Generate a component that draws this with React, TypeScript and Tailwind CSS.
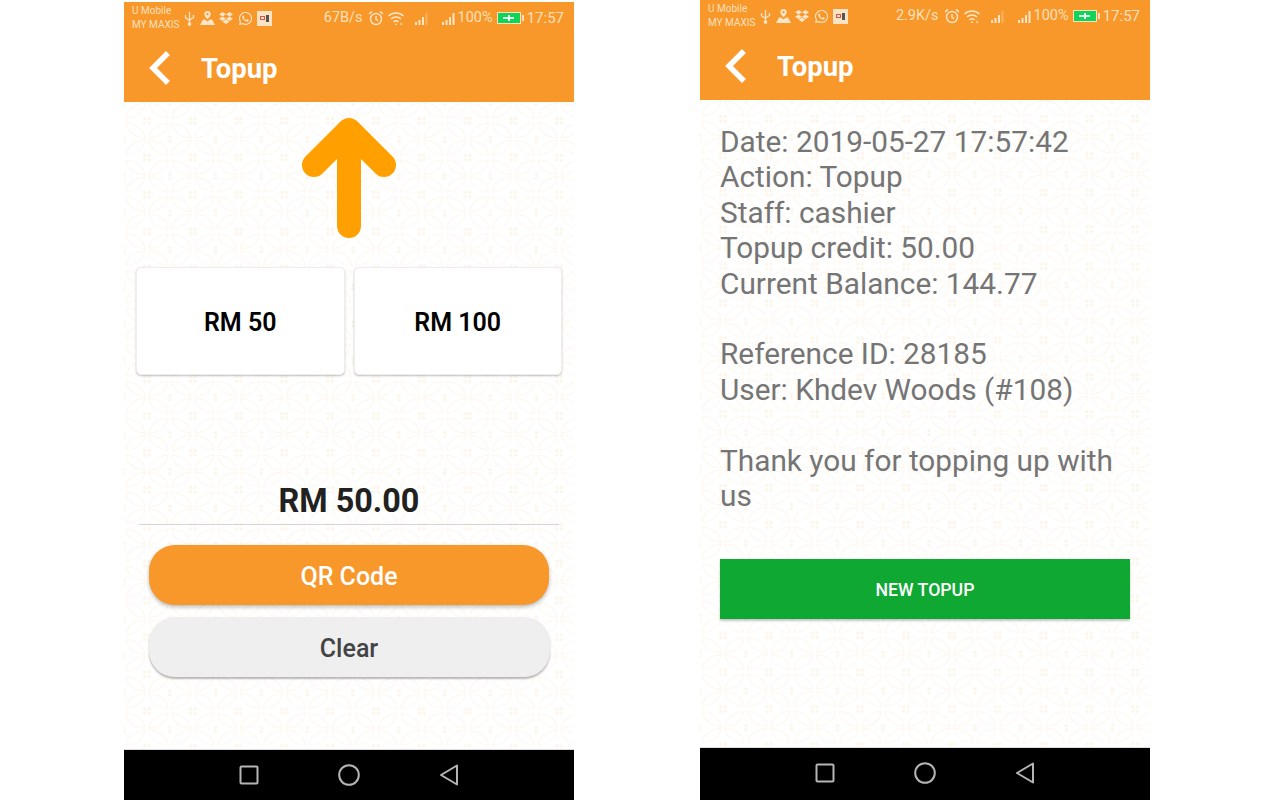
import { ReactNode } from "react";
import { FaDropbox, FaWhatsapp } from "react-icons/fa";

const font = { fontFamily: "Roboto, sans-serif" };

function PatternBg({ id }: { id: string }) {
  return (
    <svg className="absolute inset-0 h-full w-full" aria-hidden="true">
      <defs>
        <pattern id={id} width="45.8" height="36.9" patternUnits="userSpaceOnUse">
          <g fill="none" stroke="#fdf6ec" strokeWidth="1">
            <path d="M2 16 Q4 3 21 1 Q19 14 2 16Z" />
            <path d="M44 16 Q42 3 25 1 Q27 14 44 16Z" />
            <path d="M2 21 Q4 34 21 36 Q19 23 2 21Z" />
            <path d="M44 21 Q42 34 25 36 Q27 23 44 21Z" />
          </g>
          <g fill="#fdf5e9">
            <rect x="19.2" y="15" width="3" height="3" />
            <rect x="23.7" y="15" width="3" height="3" />
            <rect x="19.2" y="19.5" width="3" height="3" />
            <rect x="23.7" y="19.5" width="3" height="3" />
            <rect x="-1.5" y="1" width="3" height="3" />
            <rect x="44.3" y="1" width="3" height="3" />
            <rect x="-1.5" y="33.9" width="3" height="3" />
            <rect x="44.3" y="33.9" width="3" height="3" />
          </g>
        </pattern>
      </defs>
      <rect width="100%" height="100%" fill={`url(#${id})`} />
    </svg>
  );
}

function Signal({ dim }: { dim?: boolean }) {
  return (
    <svg width="16" height="15" viewBox="0 0 16 15" fill="#fde6c8">
      <rect x="1" y="11" width="2" height="3" />
      <rect x="4.5" y="9" width="2" height="5" />
      <rect x="8" y="6" width="2" height="8" />
      <rect x="11.5" y="2" width="2" height="12" opacity={dim ? 0.35 : 1} />
    </svg>
  );
}

function StatusBar({ speed }: { speed: string }) {
  return (
    <div className="flex h-[30px] items-center pl-2 pr-[10px] pt-[2px] text-[#fde0bb]">
      <div className="w-[52px] text-[10px] leading-[14px] whitespace-nowrap">
        <div>U Mobile</div>
        <div>MY MAXIS</div>
      </div>
      <div className="flex items-center gap-[4.5px]">
        {/* usb */}
        <svg width="11" height="15" viewBox="0 0 11 15" fill="none" stroke="#fde6c8" strokeWidth="1.3">
          <path d="M5.5 1v13M1.5 4v3l4 2.5M9.5 4v2.5l-4 2.5" />
          <circle cx="5.5" cy="13" r="1.2" fill="#fde6c8" />
        </svg>
        {/* map pin */}
        <svg width="15" height="14" viewBox="0 0 15 14" fill="#fde6c8">
          <path d="M7.5 0a3.2 3.2 0 0 1 3.2 3.2c0 1.8-2 3.6-3.2 5-1.2-1.4-3.2-3.2-3.2-5A3.2 3.2 0 0 1 7.5 0z" />
          <path d="M3 8.5h2l2.5 2 2.5-2h2l3 5.5H0z" />
          <circle cx="7.5" cy="3.2" r="1.1" fill="#f8972a" />
        </svg>
        <FaDropbox size={14} color="#fde6c8" />
        <FaWhatsapp size={15} color="#fde6c8" />
        <div className="flex h-[15px] w-[15px] items-center justify-center gap-[1px] bg-[#fce3c4]">
          <div className="h-[4px] w-[5px] border border-[#d9534f]" />
          <div className="h-[7px] w-[3px] bg-[#555555]" />
        </div>
      </div>
      <div className="ml-auto flex items-center text-[14.5px] whitespace-nowrap">
        <span>{speed}</span>
        {/* alarm */}
        <svg className="ml-[5px]" width="16" height="16" viewBox="0 0 16 16" fill="none" stroke="#fde6c8" strokeWidth="1.4">
          <circle cx="8" cy="9" r="5.5" />
          <path d="M8 6v3.3l2.2 1.4M1 4l3-2.6M15 4l-3-2.6" />
        </svg>
        {/* wifi */}
        <svg className="ml-[3px]" width="18" height="15" viewBox="0 0 17 15" fill="none" stroke="#fde6c8" strokeWidth="1.4">
          <path d="M1 5a11 11 0 0 1 15 0M3.5 8a7.4 7.4 0 0 1 10 0M6 11a3.6 3.6 0 0 1 5 0" />
          <circle cx="8.5" cy="13.2" r="0.9" fill="#fde6c8" stroke="none" />
          <path d="M13 11.5l2 1.5-2 1.5z" fill="#fde6c8" stroke="none" />
        </svg>
        <div className="ml-[9px] flex">
          <Signal dim />
        </div>
        <div className="ml-[11px] flex">
          <Signal />
        </div>
        <span className="ml-[1px]">100%</span>
        {/* battery */}
        <div className="ml-[4px] flex items-center">
          <div className="flex h-[12px] w-[24px] items-center justify-center border border-[#fde0bb] bg-[#0fd45c]">
            <div className="h-[2px] w-[11px] bg-[#e6fff0]" />
            <div className="absolute h-[6px] w-[2px] bg-[#e6fff0]" />
          </div>
          <div className="ml-[1px] h-[6px] w-[2px] bg-[#fde0bb]" />
        </div>
        <span className="ml-[3px] text-[15px]">17:57</span>
      </div>
    </div>
  );
}

function Phone({ id, speed, navExtra, topGap, children }: { id: string; speed: string; navExtra?: boolean; topGap?: boolean; children: ReactNode }) {
  return (
    <div className={`flex h-[800px] w-[450px] flex-col bg-white ${topGap ? "pt-[2px]" : ""}`}>
      <div className="h-[100px] shrink-0 bg-[#f8972a]">
        <StatusBar speed={speed} />
        <div className="flex h-[70px] items-center pl-[24px] pt-[2px]">
          <svg width="24" height="34" viewBox="0 0 24 34" fill="none" stroke="#ffffff" strokeWidth="5.5" strokeLinecap="square">
            <path d="M18 4L5 17l13 13" />
          </svg>
          <span className="ml-[29px] mt-[2px] text-[27.5px] font-bold text-white">Topup</span>
        </div>
      </div>
      <div className="relative min-h-0 flex-1 overflow-hidden">
        <PatternBg id={id} />
        <div className="relative h-full">{children}</div>
      </div>
      <div className={`flex shrink-0 items-center justify-center gap-[79px] border-t border-[#dddddd] bg-black ${navExtra ? "h-[53px] pb-[3px]" : "h-[51px]"}`}>
        <svg width="20" height="20" viewBox="0 0 20 20" fill="none" stroke="#b5b5b5" strokeWidth="2">
          <rect x="1.5" y="1.5" width="17" height="17" rx="1" />
        </svg>
        <svg width="22" height="22" viewBox="0 0 22 22" fill="none" stroke="#b5b5b5" strokeWidth="2">
          <circle cx="11" cy="11" r="9.8" />
        </svg>
        <svg width="20" height="22" viewBox="0 0 20 22" fill="none" stroke="#b5b5b5" strokeWidth="2" strokeLinejoin="round">
          <path d="M18 1.5v19L2 11z" />
        </svg>
      </div>
    </div>
  );
}

function Amount({ label }: { label: string }) {
  return (
    <div className="flex h-[108px] w-[208.5px] items-center justify-center rounded-[5px] border border-[#eeeeee] bg-white pt-[4px] text-[25px] font-semibold text-black shadow-[0_1px_2px_rgba(0,0,0,0.25)]">
      {label}
    </div>
  );
}

function TopupForm() {
  return (
    <div className="flex flex-col items-center pt-[16px]">
      <svg width="96" height="120" viewBox="0 0 96 120" fill="none" stroke="#ffa000" strokeWidth="24" strokeLinecap="round" strokeLinejoin="round">
        <path d="M48 12v96M13 47L48 12l35 35" />
      </svg>
      <div className="mt-[28.5px] flex gap-[9px]">
        <Amount label="RM 50" />
        <Amount label="RM 100" />
      </div>
      <div className="mt-[103px] w-[420px] border-b border-[#d6d6d6] pt-[1px] text-center text-[32.4px] leading-[45px] font-bold text-[#212121]">
        RM 50.00
      </div>
      <button className="mt-[20px] h-[60px] w-[400px] rounded-[26px] bg-[#f8972a] pt-[4px] text-[25px] font-medium text-white shadow-[0_2px_4px_rgba(0,0,0,0.28)]">
        QR Code
      </button>
      <button className="mt-[12px] h-[60px] w-[401px] rounded-[26px] bg-[#efefef] pt-[4px] text-[25px] font-medium text-[#444444] shadow-[0_2px_2px_rgba(0,0,0,0.28)]">
        Clear
      </button>
    </div>
  );
}

function Receipt() {
  return (
    <div className="px-5 pt-[24px]">
      <div className="text-[29.8px] leading-[35.4px] text-[#757575]">
        <div>Date: 2019-05-27 17:57:42</div>
        <div>Action: Topup</div>
        <div>Staff: cashier</div>
        <div>Topup credit: 50.00</div>
        <div>Current Balance: 144.77</div>
        <div className="h-[35.4px]" />
        <div>Reference ID: 28185</div>
        <div>User: Khdev Woods (#108)</div>
        <div className="h-[35.4px]" />
        <div>Thank you for topping up with us</div>
      </div>
      <button className="mt-[46px] h-[60px] w-full bg-[#0fa833] pt-[2px] text-[17.7px] font-medium text-white shadow-[0_2px_2px_rgba(0,0,0,0.22)]">
        NEW TOPUP
      </button>
    </div>
  );
}

export default function App() {
  return (
    <div className="flex h-[800px] w-[1280px] gap-[126px] overflow-hidden bg-white pl-[124px]" style={font}>
      <Phone id="pat-a" speed="67B/s" topGap>
        <TopupForm />
      </Phone>
      <Phone id="pat-b" speed="2.9K/s" navExtra>
        <Receipt />
      </Phone>
    </div>
  );
}
